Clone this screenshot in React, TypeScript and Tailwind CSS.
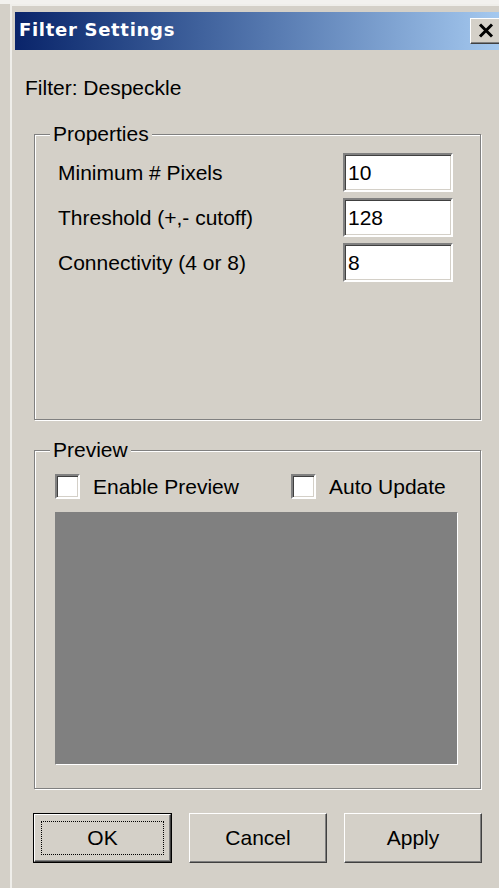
import React from "react";

// Classic Win32 dialog: filter settings for the despeckle filter

const ui = { fontFamily: '"Liberation Sans", Arial, sans-serif' };

function Edit({ value }: { value: string }) {
  return (
    <input
      readOnly
      value={value}
      className="h-[39px] w-[110px] border-2 border-t-[#808080] border-l-[#808080] border-r-white border-b-white bg-white pl-[3px] text-[21px] text-black outline-none shadow-[inset_1px_1px_0_#404040,inset_-1px_-1px_0_#d4d0c8]"
    />
  );
}

function CheckBox({ label }: { label: string }) {
  return (
    <label className="flex items-center gap-[13px]">
      <span className="h-[25px] w-[25px] border-2 border-t-[#808080] border-l-[#808080] border-r-white border-b-white bg-white shadow-[inset_1px_1px_0_#404040,inset_-1px_-1px_0_#d4d0c8]" />
      <span className="text-[21px] leading-[24px]">{label}</span>
    </label>
  );
}

function GroupBox({ title, className, children }: { title: string; className: string; children: React.ReactNode }) {
  return (
    <div className={`relative ml-[19px] w-[447px] border border-[#808080] shadow-[inset_1px_1px_0_#fff,1px_1px_0_#fff] ${className}`}>
      <span className="absolute -top-[13px] left-[15px] bg-[#d4d0c8] px-[3px] text-[21px] leading-[24px]">{title}</span>
      {children}
    </div>
  );
}

function PushButton({ label, isDefault }: { label: string; isDefault?: boolean }) {
  if (isDefault) {
    return (
      <button className="h-[50px] w-[139px] border border-black bg-[#d4d0c8] p-0">
        <span className="flex h-full w-full border border-t-white border-l-white border-r-[#404040] border-b-[#404040] p-[6px] shadow-[inset_-1px_-1px_0_#808080]">
          <span className="flex flex-1 items-center justify-center border border-dotted border-black text-[21px]">{label}</span>
        </span>
      </button>
    );
  }
  return (
    <button className="flex h-[50px] w-[138px] items-center justify-center border border-t-white border-l-white border-r-[#404040] border-b-[#404040] bg-[#d4d0c8] text-[21px] shadow-[inset_-1px_-1px_0_#808080]">
      {label}
    </button>
  );
}

export default function App() {
  const fields = [
    { label: "Minimum # Pixels", value: "10" },
    { label: "Threshold (+,- cutoff)", value: "128" },
    { label: "Connectivity (4 or 8)", value: "8" },
  ];

  return (
    <div className="h-[888px] w-[499px] overflow-hidden border-t-4 border-[#f2f1ee] bg-[#d4d0c8] text-black" style={ui}>
      <div className="ml-[10px] h-full w-[495px] border-l-2 border-t-2 border-[#efeeea] pl-[3px] pr-[3px] pt-[6px]">
        {/* caption */}
        <div className="flex h-[38px] items-center bg-gradient-to-r from-[#0a246a] to-[#a6caf0] pb-[3px] pl-[4px] pr-[1px]">
          <span
            className="text-[18px] font-bold tracking-[0.7px] text-white"
            style={{ fontFamily: '"DejaVu Sans", Verdana, sans-serif' }}
          >
            Filter Settings
          </span>
          <button className="ml-auto mt-[2px] flex h-[26px] w-[31px] items-center justify-center border border-t-white border-l-white border-r-[#404040] border-b-[#404040] bg-[#d4d0c8] shadow-[inset_-1px_-1px_0_#808080]">
            <svg width="16" height="15" viewBox="0 0 16 15">
              <path d="M2 1.5 L14 13.5 M14 1.5 L2 13.5" stroke="#000" strokeWidth="3" />
            </svg>
          </button>
        </div>

        <div className="ml-[10px] mt-[26px] text-[21px] leading-[24px]">Filter: Despeckle</div>

        <GroupBox title="Properties" className="mt-[34px] h-[286px]">
          <div className="flex flex-col gap-[6px] pl-[23px] pr-[27px] pt-[18px]">
            {fields.map((f) => (
              <div key={f.label} className="flex items-center justify-between">
                <span className="text-[21px] leading-[24px]">{f.label}</span>
                <Edit value={f.value} />
              </div>
            ))}
          </div>
        </GroupBox>

        <GroupBox title="Preview" className="mt-[30px] h-[339px]">
          <div className="pl-[20px] pr-[22px] pt-[23px]">
            <div className="flex">
              <div className="w-[236px]">
                <CheckBox label="Enable Preview" />
              </div>
              <CheckBox label="Auto Update" />
            </div>
            <div className="mt-[13px] h-[253px] w-[403px] border border-t-[#808080] border-l-[#808080] border-r-white border-b-white bg-[#808080]" />
          </div>
        </GroupBox>

        <div className="ml-[18px] mt-[24px] flex gap-[17px]">
          <PushButton label="OK" isDefault />
          <PushButton label="Cancel" />
          <PushButton label="Apply" />
        </div>
      </div>
    </div>
  );
}
